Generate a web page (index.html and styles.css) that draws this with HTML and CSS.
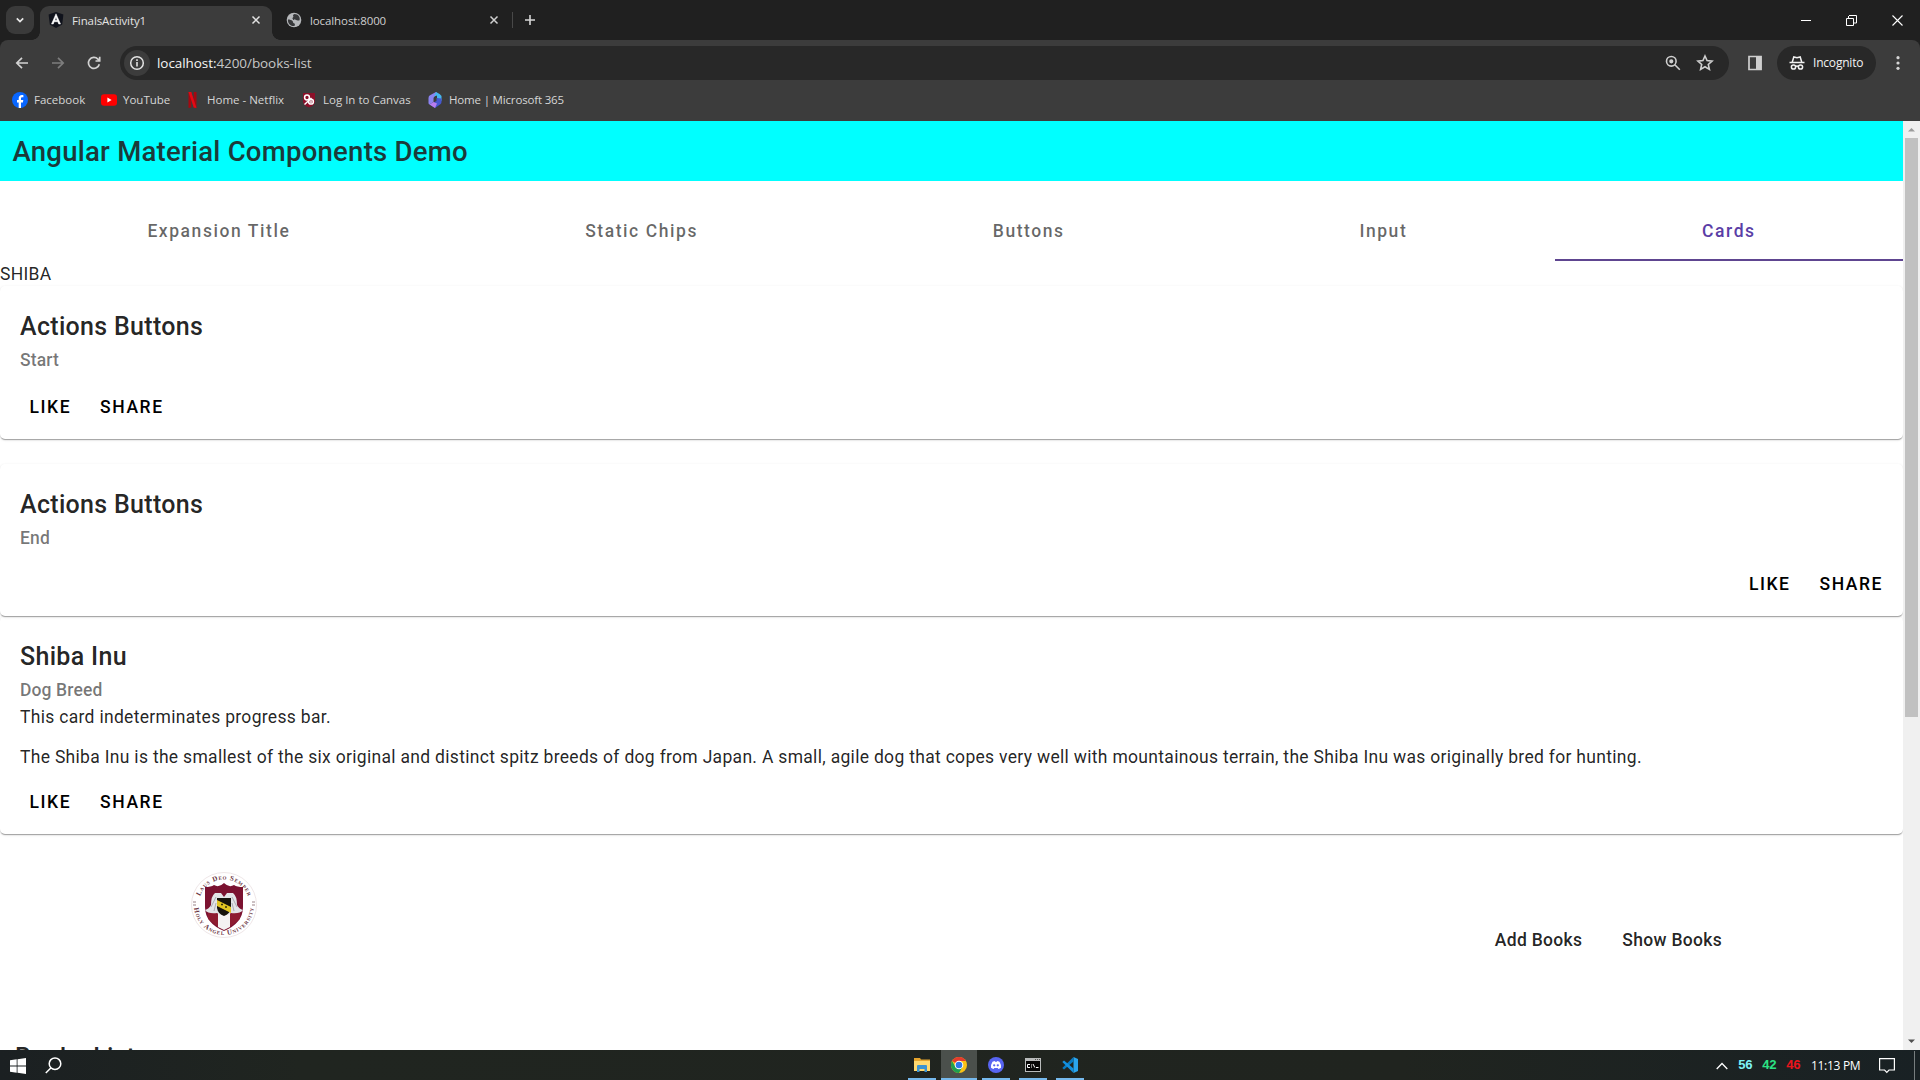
FILE: index.html
```html
<!DOCTYPE html>
<html lang="en">
<head>
<meta charset="utf-8">
<title>FinalsActivity1</title>
<link rel="stylesheet" href="styles.css">
</head>
<body>
<div class="screen">
  <header class="browser">
    <div class="tabstrip">
      <span class="tab-search"><svg width="10" height="10" viewBox="0 0 10 10"><path d="M1.8 3.3 5 6.5 8.2 3.3" fill="none" stroke="#e8e8e8" stroke-width="1.7"/></svg></span>
      <div class="tab active">
        <svg width="16" height="16" viewBox="0 0 16 16"><path d="M8 0 15.4 2.6 14.2 12.6 8 16 1.8 12.6.6 2.6Z" fill="#10131c"/><path d="M8 1.8 3.5 12h1.8l.9-2.3h3.6l.9 2.3h1.8ZM8 5.300l1.200 2.900H6.800Z" fill="#fff" stroke="#fff" stroke-width=".5"/></svg>
        <span class="tab-title">FinalsActivity1</span>
        <svg class="x" width="10" height="10" viewBox="0 0 10 10"><path d="m1.500 1.500 7 7m0-7-7 7" stroke="#e3e3e3" stroke-width="1.500"/></svg>
      </div>
      <div class="tab second">
        <svg width="16" height="16" viewBox="0 0 16 16"><circle cx="8" cy="8" r="7.300" fill="#b5b7ba"/><path d="M2 7.500c2 0 3.500.5 4.500 1.500s.2 2 1.500 2.300 1 1.500.5 2.700C4 14.500 1.600 11 2 7.500ZM8.500 2c-1.500.7-1.800 1.500-1.200 2.300S6 5.800 6.500 6.700s2.200.3 3.200 1.100 2.500 1 3.900.4C14.500 5 12 2 8.500 2Z" fill="#37383a"/></svg>
        <span class="tab-title">localhost:8000</span>
        <svg class="x" width="10" height="10" viewBox="0 0 10 10"><path d="m1.500 1.500 7 7m0-7-7 7" stroke="#d0d0d0" stroke-width="1.500"/></svg>
      </div>
      <span class="tab-divider"></span>
      <svg class="plus" width="12" height="12" viewBox="0 0 12 12"><path d="M6 1v10M1 6h10" stroke="#d6d6d6" stroke-width="1.600"/></svg>
      <div class="window-controls">
        <svg width="10" height="10" viewBox="0 0 10 10"><path d="M0 5.500h10" stroke="#fff"/></svg>
        <svg width="11" height="11" viewBox="0 0 11 11" fill="none" stroke="#fff"><path d="M.5 3.500h7v7h-7zM2.500 3.500v-2.500M3 .5h7.500v7.500H8"/></svg>
        <svg width="11" height="11" viewBox="0 0 11 11"><path d="m.5.5 10 10m0-10-10 10" stroke="#fff" stroke-width="1.100"/></svg>
      </div>
    </div>
    <div class="toolbar">
      <div class="nav-icons">
        <svg width="16" height="16" viewBox="0 0 16 16" fill="none" stroke="#d2d2d2" stroke-width="1.700"><path d="M14 8H3M8 2.800 2.800 8 8 13.200"/></svg>
        <svg width="16" height="16" viewBox="0 0 16 16" fill="none" stroke="#7d7d7d" stroke-width="1.700"><path d="M2 8h11M8 2.800 13.200 8 8 13.200"/></svg>
        <svg width="16" height="16" viewBox="0 0 16 16" fill="none" stroke="#d2d2d2" stroke-width="1.700"><path d="M13.300 9.200A5.500 5.500 0 1 1 11.900 4.100L13.500 5.700M13.700 1.800V6H9.500"/></svg>
      </div>
      <div class="omnibox">
        <span class="site-info"><svg width="16" height="16" viewBox="0 0 16 16"><circle cx="8" cy="8" r="6.300" fill="none" stroke="#e3e3e3" stroke-width="1.500"/><path d="M8 7v4.500M8 4.300v1.600" stroke="#e3e3e3" stroke-width="1.600"/></svg></span>
        <span class="url"><b>localhost:</b>4200/books-list</span>
        <svg class="magnify" width="16" height="16" viewBox="0 0 16 16" fill="none" stroke="#cfcfcf" stroke-width="1.600"><circle cx="6.300" cy="6.300" r="4.800"/><path d="m9.800 9.800 5 5"/><circle cx="6.300" cy="6.300" r="1.300" fill="#cfcfcf"/></svg>
        <svg width="18" height="18" viewBox="0 0 18 18"><path d="m9 2 2.050 4.600 5 .5-3.750 3.350 1.100 4.950L9 12.800l-4.400 2.600 1.100-4.950L1.950 7.100l5-.5Z" fill="none" stroke="#cfcfcf" stroke-width="1.600"/></svg>
      </div>
      <svg class="side-panel" width="16" height="16" viewBox="0 0 16 16"><path d="M2 1.500h12v13H2z" fill="none" stroke="#cfcfcf" stroke-width="1.700"/><path d="M9 1h5.500v14H9z" fill="#cfcfcf"/></svg>
      <div class="incognito">
        <svg width="16" height="16" viewBox="0 0 16 16" fill="none" stroke="#f2f2f2" stroke-width="1.500"><path d="M.5 7.500h15M3.300 7 4.800 2l3.200.8L11.200 2l1.500 5"/><circle cx="4.500" cy="12" r="2.100"/><circle cx="11.500" cy="12" r="2.100"/><path d="M6.500 11.500q1.500-.8 3 0"/></svg>
        <span>Incognito</span>
      </div>
      <svg class="dots" width="4" height="16" viewBox="0 0 4 16" fill="#d6d6d6"><circle cx="2" cy="2.700" r="1.600"/><circle cx="2" cy="8" r="1.600"/><circle cx="2" cy="13.300" r="1.600"/></svg>
    </div>
    <nav class="bookmarks">
      <span class="bookmark"><svg width="16" height="16" viewBox="0 0 16 16"><circle cx="8" cy="8" r="8" fill="#0866ff"/><path d="M6.700 16v-5.500H5V8h1.700V6.500C6.700 4.200 7.900 3 10 3c.6 0 1 .1 1.400.2v2.100h-1c-1 0-1.400.4-1.400 1.300V8h2.300l-.4 2.500H9V16Z" fill="#fff"/></svg>Facebook</span>
      <span class="bookmark"><svg width="16" height="16" viewBox="0 0 16 16"><rect y="2.300" width="16" height="11.400" rx="3" fill="#f00"/><path d="m6.400 5.500 4.200 2.500-4.200 2.500Z" fill="#fff"/></svg>YouTube</span>
      <span class="bookmark"><svg width="16" height="16" viewBox="0 0 16 16"><path d="M3.500 0h2.800v15.500L3.500 16zM8.700 0h2.800v16l-2.800-.5z" fill="#a50810"/><path d="M3.500 0h2.800l5.200 16-2.800-.5z" fill="#e50914"/></svg>Home - Netflix</span>
      <span class="bookmark"><svg width="16" height="16" viewBox="0 0 16 16"><path d="M2 1h12v9q-1 4-6 5.500Q3 14 2 10Z" fill="#8b1029"/><g fill="none" stroke="#fff" stroke-width="1.500"><circle cx="6" cy="5.500" r="2.400"/><circle cx="10" cy="9.700" r="2.400"/><path d="m3.500 12.500 7-6.500"/></g><circle cx="10" cy="9.700" r="1.600" fill="#d9b9c2"/></svg>Log In to Canvas</span>
      <span class="bookmark tight"><svg width="16" height="16" viewBox="0 0 16 16"><path d="M9 0 3 3.200Q1.500 4 1.500 6v5q0 1 1 1.500l4-2.500V6.500Q6.500 5 8 4l3-2Z" fill="#8b83f0"/><path d="M9 0q4.500 2 5.500 4v5L10 6V3.500L7 4.500Z" fill="#45b7ee"/><path d="M14.500 6.500V10q0 1.600-1.500 2.400L8 16l-5.500-3.500L9.500 9V6Z" fill="#4657cf"/><path d="m2.500 12.500 4-2.500 3.500 1.500L8 16Z" fill="#b97df0"/></svg>Home | Microsoft 365</span>
    </nav>
  </header>

  <div class="viewport">
    <main class="page">
      <h1 class="app-bar">Angular Material Components Demo</h1>
      <div class="mat-tabs">
        <div class="mat-tab">Expansion Title</div>
        <div class="mat-tab">Static Chips</div>
        <div class="mat-tab">Buttons</div>
        <div class="mat-tab">Input</div>
        <div class="mat-tab selected">Cards</div>
      </div>
      <div class="label">SHIBA</div>
      <section class="card">
        <h2>Actions Buttons</h2>
        <h3>Start</h3>
        <div class="actions"><button>LIKE</button><button>SHARE</button></div>
      </section>
      <br>
      <section class="card raised">
        <h2>Actions Buttons</h2>
        <h3>End</h3>
        <div class="actions end"><button>LIKE</button><button>SHARE</button></div>
      </section>
      <section class="card">
        <h2>Shiba Inu</h2>
        <h3>Dog Breed</h3>
        <div class="content">
          <p>This card indeterminates progress bar.</p>
          <p>The Shiba Inu is the smallest of the six original and distinct spitz breeds of dog from Japan. A small, agile dog that copes very well with mountainous terrain, the Shiba Inu was originally bred for hunting.</p>
        </div>
        <div class="actions"><button>LIKE</button><button>SHARE</button></div>
      </section>
      <div class="site-header">
        <svg class="crest" width="68" height="68" viewBox="0 0 68 68">
          <defs><path id="top-arc" d="M8.500 34a25.500 25.500 0 0 1 51 0"/><path id="bottom-arc" d="M4 34a30 30 0 0 0 60 0"/></defs>
          <circle cx="34" cy="34" r="32.500" fill="#fff" stroke="#eadfe1" stroke-width=".8"/>
          <text class="crest-text"><textPath href="#top-arc" startOffset="50%" text-anchor="middle" textLength="62">Laus Deo Semper</textPath></text>
          <text class="crest-text"><textPath href="#bottom-arc" startOffset="50%" text-anchor="middle" textLength="88">Holy Angel University</textPath></text>
          <path d="M3 34h3M62 34h3M3 31h3M62 31h3" stroke="#9a8287"/>
          <path d="M15 16q6 0 9-2 5 3 10-2 5 5 10 2 3 2 9 2v20q0 16-19 24Q15 52 15 36Z" fill="#7b1230"/>
          <path d="M18 41v7l9 7 7 4 7-4 9-7v-7Z" fill="#8e1c31"/>
          <path d="M28 42h12v14l-6 3-6-3Z" fill="#f4f1f2"/>
          <path d="M15 39q4-1 6-5 0-9 4-12h6l3 4 3-4h6q4 3 4 12 2 4 6 5-3 4-12 3l-3 2H30l-3-2q-9 1-12-3Z" fill="#e3e4e7"/>
          <path d="m21 36 5-10M47 36l-5-10M24 40l2-8M44 40l-2-8" stroke="#a4a6ad" stroke-width=".9"/>
          <path d="M27 27h14v10q-1 6-7 8-6-2-7-8Z" fill="#16120c"/><path d="m27 29 14 7v6L27 35Z" fill="#e2c422"/><path d="M31 33.500h2m2 2.500h2" stroke="#3a300c" stroke-width="1.500"/>
        </svg>
        <nav class="links"><a>Add Books</a><a>Show Books</a></nav>
      </div>
      <h2 class="list-title">Books List</h2>
    </main>
    <div class="scrollbar">
      <svg width="17" height="17" viewBox="0 0 17 17"><path d="M5 10.500h7L8.500 7Z" fill="#9b9b9b"/></svg>
      <div class="thumb"></div>
      <svg width="17" height="17" viewBox="0 0 17 17"><path d="M5 6.500h7L8.500 10Z" fill="#505050"/></svg>
    </div>
  </div>

  <footer class="taskbar">
    <div class="start">
      <svg width="16" height="16" viewBox="0 0 16 16" fill="#fff"><path d="M0 2.200 6.700 1.300V7.600H0zM7.500 1.200 16 0V7.600H7.500zM0 8.400H6.700V14.700L0 13.800zM7.500 8.400H16V16L7.500 14.800z"/></svg>
      <svg width="17" height="17" viewBox="0 0 17 17" fill="none" stroke="#fff" stroke-width="1.500"><circle cx="10" cy="6.700" r="5.800"/><path d="M6 10.800.8 16"/></svg>
    </div>
    <div class="apps">
      <span class="app"><svg width="16" height="16" viewBox="0 0 16 16"><path d="M0 1h6l1 1.500h9V6H0Z" fill="#e6a52d"/><path d="M0 4h16v10H0Z" fill="#ffd970"/><path d="M3 15V9q0-1 1-1h8q1 0 1 1v6h-2.500v-3h-5v3Z" fill="#3c93d0"/></svg></span>
      <span class="app current"><svg width="16" height="16" viewBox="0 0 16 16"><circle cx="8" cy="8" r="8" fill="#fbc116"/><path d="M8 8 1.070 4A8 8 0 0 1 14.930 4H8Z" fill="#e33b2e"/><path d="M1.070 4A8 8 0 0 0 8 16l3.460-6L8 8 4.540 10Z" fill="#1fa051"/><circle cx="8" cy="8" r="4.300" fill="#fff"/><circle cx="8" cy="8" r="3.300" fill="#2f78e8"/></svg></span>
      <span class="app"><svg width="16" height="16" viewBox="0 0 16 16"><circle cx="8" cy="8" r="8" fill="#5865f2"/><path d="M4.500 4.700 6.700 4l.4.700h1.800l.4-.7 2.200.7q1.700 2.600 1.500 6-1.200 1-2.600 1.200l-.7-1H6.300l-.7 1Q4.200 11.700 3 10.700q-.2-3.400 1.500-6Z" fill="#fff"/><circle cx="6.200" cy="8.300" r="1.150" fill="#5865f2"/><circle cx="9.800" cy="8.300" r="1.150" fill="#5865f2"/></svg></span>
      <span class="app"><svg width="16" height="14" viewBox="0 0 16 14"><path d="M0 0h16v14H0z" fill="#b9bbbb"/><path d="M1 3h14v10H1z" fill="#050505"/><path d="M10 1.500h1m1 0h1m1 0h1" stroke="#555"/><path d="M5 6.500H2.500v3H5M6.500 6.500v1m0 1v1M8 6l1.800 3.500M11 9.500h2.500" fill="none" stroke="#fff"/></svg></span>
      <span class="app"><svg width="16" height="16" viewBox="0 0 16 16"><path d="M11.500 0 16 2v12l-4.500 2Z" fill="#2aa5ee"/><path d="M11.500 0v4.600L2 12.400.3 11Z" fill="#087bc4"/><path d="M11.500 16v-4.600L2 3.600.3 5Z" fill="#1490df"/></svg></span>
    </div>
    <div class="tray">
      <svg width="12" height="8" viewBox="0 0 12 8"><path d="M.7 7 6 1.500 11.300 7" fill="none" stroke="#fff" stroke-width="1.300"/></svg>
      <span class="temp t-cyan">56</span><span class="temp t-green">42</span><span class="temp t-red">46</span>
      <span class="clock">11:13 PM</span>
      <svg class="notice" width="16" height="16" viewBox="0 0 16 16"><path d="M.6.600h14.800v11.400H10L7.800 14.300 5.600 12H.6Z" fill="none" stroke="#fff" stroke-width="1.200"/></svg>
      <span class="peek"></span>
    </div>
  </footer>
</div>
</body>
</html>
```
FILE: styles.css
```css
* { box-sizing: border-box; }
body { margin: 0; background: #fff; }
svg { display: block; flex: none; }
h1, h2, h3, p { margin: 0; }

.screen { width: 1920px; height: 1080px; display: flex; flex-direction: column; overflow: hidden; }

/* Browser frame */
.browser { height: 121px; flex: none; background: #202020; color: #e3e3e3; font: 12px/16px "Open Sans", "Noto Sans", sans-serif; }
.tabstrip { height: 40px; padding: 6px 17px 0 6px; display: flex; align-items: flex-start; }
.tab-search { width: 28px; height: 28px; margin-right: 6px; border-radius: 9px; background: #3a3a3a; display: grid; place-items: center; }
.tab { height: 34px; display: flex; align-items: center; padding: 0 11px 6px 8px; gap: 8px; white-space: nowrap; }
.tab .x { margin-left: auto; }
.tab.active { position: relative; width: 232px; background: #3c3c3c; border-radius: 9px 9px 0 0; }
.tab.active::before, .tab.active::after { content: ""; position: absolute; bottom: 0; width: 8px; height: 8px; }
.tab.active::before { left: -8px; background: radial-gradient(circle at 0 0, transparent 7.500px, #3c3c3c 8px); }
.tab.active::after { right: -8px; background: radial-gradient(circle at 100% 0, transparent 7.500px, #3c3c3c 8px); }
.tab.second { width: 233px; padding-left: 14px; padding-right: 6px; color: #cfcfcf; }
.tab-title { font-size: 11.500px; line-height: 17px; padding-top: 1px; letter-spacing: -.1px; }
.tab-divider { width: 1px; height: 16px; margin: 6px 11px 0 7px; background: #484848; }
.plus { margin-top: 8px; }
.window-controls { margin-left: auto; display: flex; align-items: center; gap: 35px; height: 28px; }

.toolbar { height: 46px; padding: 6px 20px 6px 14px; background: #3c3c3c; border-radius: 8px 8px 0 0; display: flex; align-items: center; }
.nav-icons { width: 106px; display: flex; gap: 20px; }
.omnibox { width: 1609px; height: 34px; border-radius: 17px; background: #282828; padding: 0 15px 0 4px; display: flex; align-items: center; }
.site-info { width: 26px; height: 26px; border-radius: 50%; background: #3c3c3c; display: grid; place-items: center; }
.url { margin-left: 7px; font-size: 13.500px; letter-spacing: -.07px; color: #c7c7c7; }
.url b { font-weight: 400; color: #f5f5f5; }
.magnify { margin-left: auto; margin-right: 15px; }
.side-panel { margin-left: 18px; }
.incognito { width: 99px; height: 34px; margin-left: 14px; border-radius: 17px; background: #282828; color: #f2f2f2; letter-spacing: -.2px; display: flex; align-items: center; gap: 8px; padding-left: 12px; }
.dots { margin-left: auto; }
.bookmarks { height: 35px; padding: 0 0 7px 12px; background: #3c3c3c; display: grid; grid-template-columns: 89px 84px 116px 126px 150px; align-items: center; font-size: 11.500px; color: #d6d6d6; }
.bookmark { display: flex; align-items: center; gap: 6px; white-space: nowrap; }
.bookmark.tight { letter-spacing: -.17px; }

/* Page */
.viewport { height: 929px; flex: none; display: flex; overflow: hidden; }
.page { width: 1903px; background: #fff; color: rgba(0,0,0,.87); font: 17.500px/25px Roboto, sans-serif; letter-spacing: .305px; overflow: hidden; }
.app-bar { height: 60px; padding: 0 12.500px; background: #0ff; font-size: 27.500px; font-weight: 500; line-height: 61px; letter-spacing: .26px; color: #1c3a3a; }
.mat-tabs { height: 60px; margin-top: 20px; display: flex; }
.mat-tab { flex: 1 0 auto; padding: 0 30px; display: flex; align-items: center; justify-content: center; font-weight: 500; letter-spacing: .0892857em; color: rgba(0,0,0,.6); }
.mat-tab.selected { color: #5a3ea6; box-shadow: inset 0 -2px #5e4590; }
.label { height: 25px; line-height: 27px; }
.card { border-radius: 5px; box-shadow: 0 2px 1px -1px rgba(0,0,0,.2), 0 1px 1px rgba(0,0,0,.14), 0 1px 3px rgba(0,0,0,.12); background: #fff; }
.card.raised { position: relative; }
.card h2 { padding: 21px 20px 0; font-size: 25px; line-height: 40px; font-weight: 500; letter-spacing: .0125em; }
.card h3 { padding: 0 20px; font-size: 17.500px; line-height: 27.500px; font-weight: 500; letter-spacing: .0071428571em; color: rgba(0,0,0,.54); }
.content { padding: 0 20px; }
.content p + p { margin-top: 15px; }
.actions { height: 64px; padding: 10px 10px 9px 19.500px; display: flex; }
.actions.end { justify-content: flex-end; }
.actions button { height: 45px; padding: 0 10px; margin: 0; border: 0; background: none; font: 500 17.500px/45px Roboto, sans-serif; letter-spacing: .0892857em; color: #000; }
.actions button + button { margin-left: 9px; }
.site-header { height: 204px; padding: 37px 181px 0 190px; display: flex; justify-content: space-between; }
.crest-text { font: 700 7px "Liberation Serif", serif; fill: #6a3340; font-variant: small-caps; letter-spacing: 0; }
.links { display: flex; gap: 40px; padding-top: 57px; font-weight: 500; }
.list-title { padding-left: 15px; font-size: 25px; line-height: 40px; font-weight: 500; letter-spacing: .0125em; }

.scrollbar { width: 17px; background: #f0f0f0; display: flex; flex-direction: column; align-items: center; }
.thumb { width: 13px; height: 579px; background: #c1c1c1; margin-bottom: auto; }

/* Taskbar */
.taskbar { height: 30px; flex: none; display: grid; grid-template-columns: 905px 1fr 220px; background: linear-gradient(90deg, #1b2022 0, #202520 300px, #20241f 1400px, #192124 100%); color: #fff; }
.start { display: flex; align-items: center; gap: 19px; padding-left: 10px; }
.apps { display: flex; }
.app { width: 28px; height: 30px; margin: 0 3px; display: flex; flex-direction: column; align-items: center; justify-content: center; box-shadow: inset 0 -2px #76b9ed; }
.app.current { width: 36px; margin: 0 2px; background: #4b504c; }
.app:not(.current) + .app:not(.current) { margin-left: 6px; }
.tray { display: flex; align-items: center; padding-left: 16px; }
.temp { width: 24px; padding-top: 1px; font: 700 13px/30px "Liberation Mono", monospace; letter-spacing: -.8px; }
.t-cyan { color: #7ff3f6; margin-left: 10px; }
.t-green { color: #2be283; }
.t-red { color: #e8141c; width: 25px; }
.clock { width: 68px; font: 12px/30px "Open Sans", sans-serif; letter-spacing: -.3px; }
.peek { width: 1px; height: 30px; margin-left: 19px; background: #777d7e; }
```
